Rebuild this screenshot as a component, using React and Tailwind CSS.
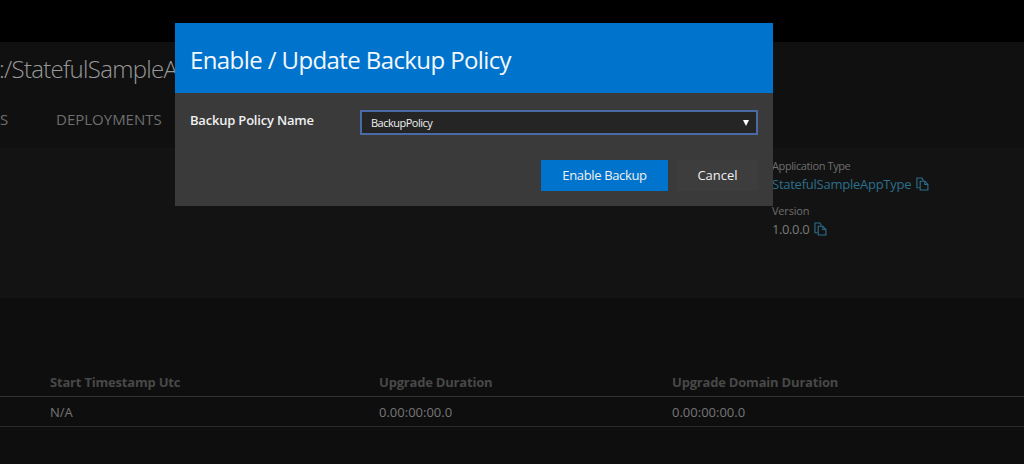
import React from "react";

const font = { fontFamily: '"Open Sans", "Noto Sans", sans-serif' };

const CopyIcon = () => (
  <svg width="13" height="14" viewBox="0 0 14 15" fill="none" stroke="#2b6f8c" strokeWidth="1.2" className="ml-[5px] shrink-0">
    <path d="M4 11.5H1V1H6.5L8 4" />
    <path d="M4.5 4.5H9.5L12.8 8V14H4.5Z" />
    <path d="M9.5 4.5V8H12.8" />
  </svg>
);

const Modal = () => (
  <div className="absolute left-[175px] top-[23px] w-[598px] h-[183px] bg-[#3a3a3a]">
    <div className="h-[70px] bg-[#0074cc] pl-[15px] pt-[3px] flex items-center">
      <h1 className="text-[24px] leading-[32px] text-[#f4f8fc] tracking-[-0.6px]">Enable / Update Backup Policy</h1>
    </div>
    <div className="px-[15px] pt-[17px]">
      <div className="flex">
        <div className="w-[170px] pt-[1px] text-[13px] leading-[18px] font-semibold text-[#f0f0f0] tracking-[-0.2px]">Backup Policy Name</div>
        <div className="w-[398px] h-[25px] border-2 border-[#4a6aa5] bg-[#252525] pl-[9px] pr-[7px] flex items-center justify-between">
          <span className="text-[11px] leading-[16px] pt-[1px] text-[#f0f0f0] tracking-[-0.5px]">BackupPolicy</span>
          <span className="w-0 h-0 border-l-[3px] border-r-[3px] border-t-[6px] border-l-transparent border-r-transparent border-t-white" />
        </div>
      </div>
      <div className="flex justify-end gap-[9px] mt-[25px]">
        <button className="w-[127px] h-[31px] bg-[#0074cc] text-[13px] text-[#f0f0f0] tracking-[-0.35px]">Enable Backup</button>
        <button className="w-[81px] h-[31px] bg-[#3d3d3d] text-[13px] text-[#f0f0f0]">Cancel</button>
      </div>
    </div>
  </div>
);

const App = () => (
  <div className="relative w-[1024px] h-[464px] overflow-hidden bg-[#0e0e0e]" style={font}>
    <div className="h-[42px] bg-black" />

    {/* title and tabs */}
    <div className="h-[106px] bg-[#101010]">
      <div className="pt-[11px] text-[24px] leading-[32px] font-light text-[#999999] tracking-[-0.7px] whitespace-nowrap -ml-[1px]">:/StatefulSampleA</div>
      <div className="mt-[24px] flex text-[15px] leading-[20px] text-[#6e6e6e] whitespace-nowrap">
        <span className="w-[56px]">S</span>
        <span>DEPLOYMENTS</span>
      </div>
    </div>

    {/* essentials */}
    <div className="h-[150px] bg-[#131313] pl-[772px] pt-[10px]">
      <div className="text-[11px] leading-[15px] text-[#6e6e6e] tracking-[-0.4px]">Application Type</div>
      <div className="flex items-center mt-[1px] text-[13px] leading-[20px] text-[#2b6f8c] tracking-[-0.25px]">StatefulSampleAppType<CopyIcon /></div>
      <div className="mt-[9px] text-[11px] leading-[15px] text-[#6e6e6e] tracking-[-0.2px]">Version</div>
      <div className="flex items-center mt-[1px] text-[13px] leading-[20px] text-[#7a7a7a] tracking-[-0.4px]">1.0.0.0<CopyIcon /></div>
    </div>

    {/* upgrade table */}
    <div className="pt-[69px]">
      <div className="h-[30px] grid grid-cols-[50px_329px_293px_1fr] text-[13px] leading-[30px] font-bold tracking-[-0.2px] text-[#484848] border-b border-[#333333]">
        <span />
        <span>Start Timestamp Utc</span>
        <span>Upgrade Duration</span>
        <span>Upgrade Domain Duration</span>
      </div>
      <div className="h-[30px] grid grid-cols-[50px_329px_293px_1fr] text-[13px] leading-[30px] text-[#767676] border-b border-[#2a2a2a]">
        <span />
        <span>N/A</span>
        <span>0.00:00:00.0</span>
        <span>0.00:00:00.0</span>
      </div>
    </div>

    <Modal />
  </div>
);

export default App;
